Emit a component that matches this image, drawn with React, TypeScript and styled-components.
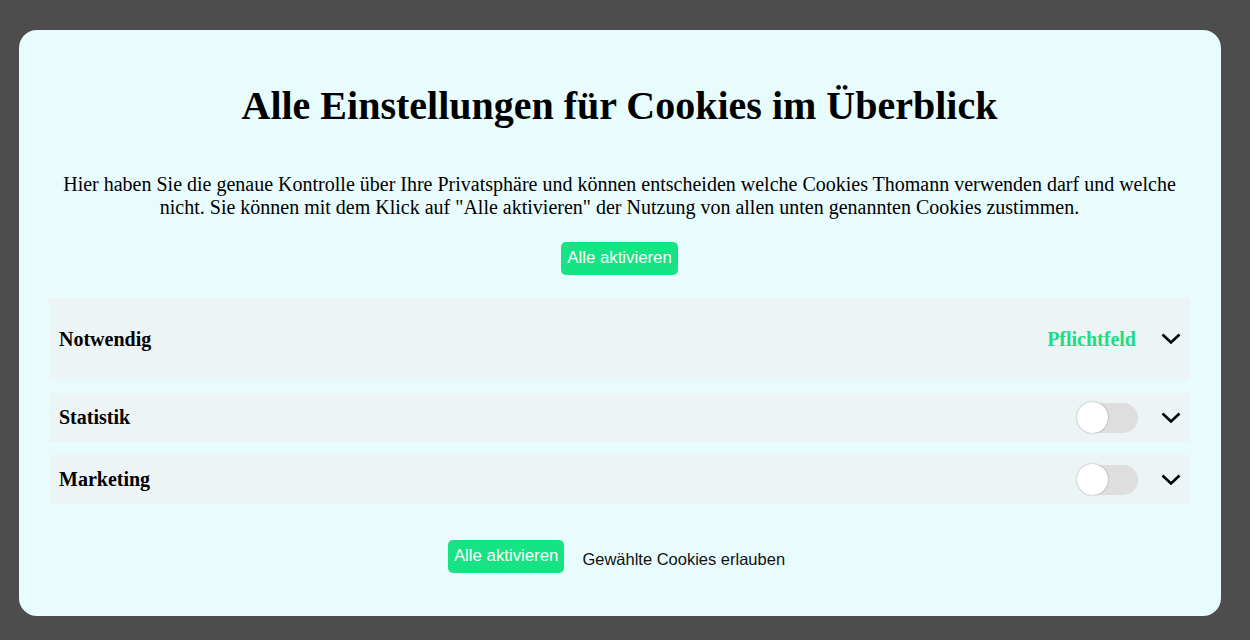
import React from "react";
import styled, { createGlobalStyle } from "styled-components";

const Global = createGlobalStyle`
  html, body { margin: 0; padding: 0; background: #4d4d4d; }
  body { font-family: "Liberation Serif", "Times New Roman", serif; }
`;

const Page = styled.div`
  width: 1250px;
  height: 640px;
  background: #4d4d4d;
  padding-top: 30px;
  box-sizing: border-box;
`;

const Modal = styled.div`
  margin-left: 19px;
  width: 1202px;
  height: 586px;
  box-sizing: border-box;
  background: #e8fbfd;
  border-radius: 18px;
  padding: 53px 31px 0 30px;
  display: flex;
  flex-direction: column;
  align-items: stretch;
`;

const Title = styled.h1`
  margin: 0;
  font-size: 40px;
  line-height: 46px;
  font-weight: bold;
  text-align: center;
  color: #000;
`;

const Intro = styled.p`
  margin: 44px 0 0;
  font-size: 20px;
  line-height: 23px;
  text-align: center;
  color: #000;
`;

const Center = styled.div<{ $top: number; $shift?: number }>`
  display: flex;
  justify-content: center;
  align-items: center;
  gap: 18px;
  margin-top: ${(p) => p.$top}px;
  padding-right: ${(p) => p.$shift ?? 0}px;
`;

const GreenButton = styled.button`
  height: 33px;
  padding: 0 6px 2px;
  border: none;
  border-radius: 5px;
  background: #16e383;
  color: #fff;
  font-family: "Liberation Sans", Arial, sans-serif;
  font-size: 16.8px;
  line-height: 30px;
  cursor: pointer;
`;

const PlainButton = styled.button`
  border: none;
  background: transparent;
  padding: 0;
  margin-top: 5px;
  color: #111;
  font-family: "Liberation Sans", Arial, sans-serif;
  font-size: 16.5px;
  cursor: pointer;
`;

const Rows = styled.div`
  display: flex;
  flex-direction: column;
  gap: 13px;
  margin-top: 23px;
`;

const Row = styled.div<{ $h: number }>`
  height: ${(p) => p.$h}px;
  background: #ecf4f6;
  display: flex;
  align-items: center;
  padding: 0 9px 0 10px;
  box-sizing: border-box;
`;

const Label = styled.div`
  flex: 1;
  font-size: 20px;
  font-weight: bold;
  color: #000;
`;

const Required = styled.span`
  font-size: 20px;
  font-weight: bold;
  color: #1fdc84;
`;

const Toggle = styled.div`
  position: relative;
  width: 61px;
  height: 30px;
  border-radius: 15px;
  background: #dedede;
`;

const Knob = styled.div`
  position: absolute;
  left: 0;
  top: -0.5px;
  width: 31px;
  height: 31px;
  border-radius: 50%;
  background: #fff;
  box-shadow: 0 0 2px rgba(0, 0, 0, 0.35);
`;

const Chevron = styled.svg<{ $gap: number }>`
  width: 20px;
  height: 12px;
  margin-left: ${(p) => p.$gap}px;
`;

const ChevronIcon = ({ gap = 25 }: { gap?: number }) => (
  <Chevron $gap={gap} viewBox="0 0 20 12">
    <path d="M1.5 1.5 L10 9.5 L18.5 1.5" fill="none" stroke="#000" strokeWidth="2.6" />
  </Chevron>
);

export default function App() {
  return (
    <>
      <Global />
      <Page>
        <Modal>
          <Title>Alle Einstellungen für Cookies im Überblick</Title>
          <Intro>
            Hier haben Sie die genaue Kontrolle über Ihre Privatsphäre und können entscheiden welche Cookies Thomann
            verwenden darf und welche nicht. Sie können mit dem Klick auf "Alle aktivieren" der Nutzung von allen unten
            genannten Cookies zustimmen.
          </Intro>
          <Center $top={23}>
            <GreenButton>Alle aktivieren</GreenButton>
          </Center>
          <Rows>
            <Row $h={82}>
              <Label>Notwendig</Label>
              <Required>Pflichtfeld</Required>
              <ChevronIcon />
            </Row>
            <Row $h={49}>
              <Label>Statistik</Label>
              <Toggle>
                <Knob />
              </Toggle>
              <ChevronIcon gap={23} />
            </Row>
            <Row $h={49}>
              <Label>Marketing</Label>
              <Toggle>
                <Knob />
              </Toggle>
              <ChevronIcon gap={23} />
            </Row>
          </Rows>
          <Center $top={36} $shift={6}>
            <GreenButton>Alle aktivieren</GreenButton>
            <PlainButton>Gewählte Cookies erlauben</PlainButton>
          </Center>
        </Modal>
      </Page>
    </>
  );
}
